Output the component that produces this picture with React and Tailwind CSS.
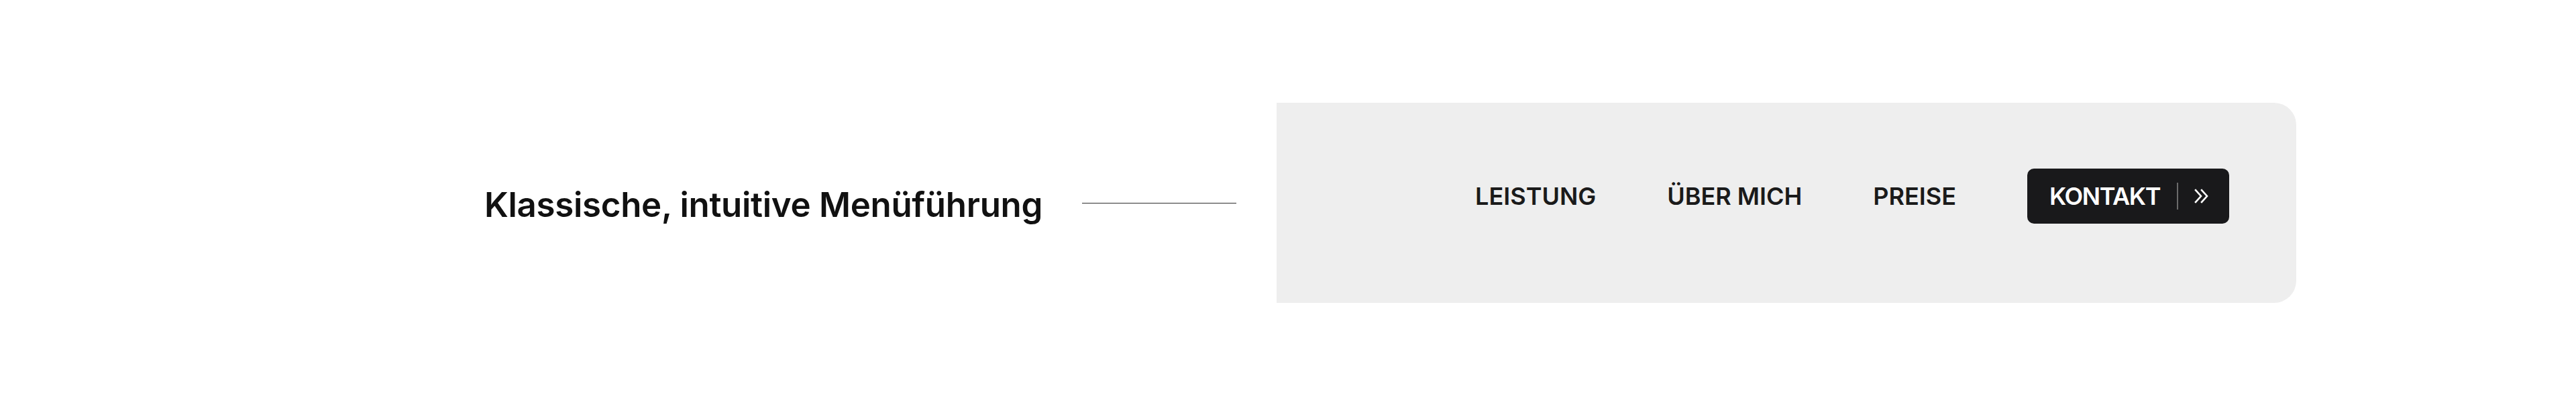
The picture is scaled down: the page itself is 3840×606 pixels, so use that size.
export default function App() {
  const navFont = { fontFamily: "Inter, 'Liberation Sans', sans-serif" };
  return (
    <div className="w-[3840px] h-[606px] bg-white" style={navFont}>
      <div className="flex items-center gap-[60px] pl-[722px] pt-[153px]">
        <h2 className="w-[831px] text-[51px] leading-none font-semibold text-[#111111] tracking-[-0.3px] mt-[5px] whitespace-nowrap">
          Klassische, intuitive Menüführung
        </h2>
        <div className="w-[230px] h-px bg-[#2e2e2e]" />
        <div className="w-[1520px] h-[298px] bg-[#eeeeee] rounded-r-[33px] flex justify-end items-start pt-[98px] pr-[100px]">
          <nav className="flex items-center">
            <a className="text-[36px] leading-none font-semibold text-[#1a1a1a] whitespace-nowrap">LEISTUNG</a>
            <a className="ml-[106px] text-[36px] leading-none font-semibold text-[#1a1a1a] whitespace-nowrap">ÜBER MICH</a>
            <a className="ml-[106px] text-[36px] leading-none font-semibold text-[#1a1a1a] whitespace-nowrap">PREISE</a>
            <button className="ml-[106px] w-[301px] h-[82px] rounded-[10px] bg-[#19191b] flex items-center pl-[33px]">
              <span className="w-[164px] text-[36px] leading-none font-semibold text-white tracking-[-1.4px] whitespace-nowrap text-left">KONTAKT</span>
              <span className="ml-[26px] w-[2px] h-[40px] bg-[#6b6b6b]" />
              <svg className="ml-[23px]" width="24" height="24" viewBox="0 0 24 24" fill="none" stroke="white" strokeWidth="2.6" strokeLinecap="square" strokeLinejoin="miter">
                <polyline points="3,3 11,12 3,21" />
                <polyline points="12,3 20,12 12,21" />
              </svg>
            </button>
          </nav>
        </div>
      </div>
    </div>
  );
}
